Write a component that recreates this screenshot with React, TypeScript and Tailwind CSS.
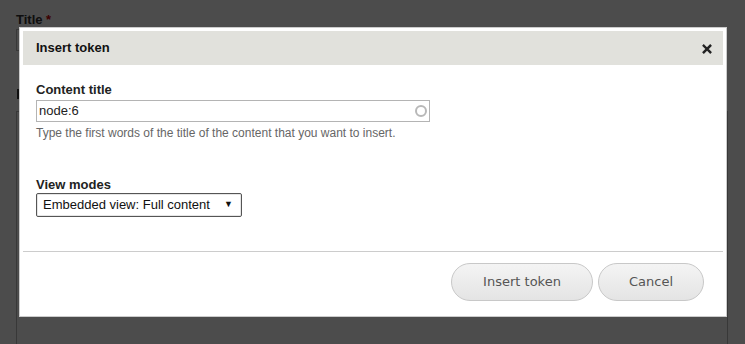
import type { ReactNode } from "react";

const sans = "font-['Liberation_Sans',Arial,sans-serif]";

function Label({ children }: { children: ReactNode }) {
  return <div className="text-[13px] font-bold leading-[16px] text-[#222]">{children}</div>;
}

function PillButton({ children, className }: { children: ReactNode; className: string }) {
  return (
    <button
      type="button"
      className={`h-[38px] rounded-[20px] border border-[#c8c8c8] bg-gradient-to-b from-[#f4f4f4] to-[#e4e4e4] font-['DejaVu_Sans',Verdana,sans-serif] text-[13px] text-[#555] ${className}`}
    >
      {children}
    </button>
  );
}

export default function App() {
  return (
    <div className={`relative h-[344px] w-[745px] overflow-hidden bg-white ${sans}`}>
      {/* page behind the modal */}
      <div className="px-[16px] pt-[12px] pr-[17px]">
        <div className="text-[13px] font-bold leading-[16px] text-[#333]">
          Title <span className="text-[#c00]">*</span>
        </div>
        <div className="mt-[1px] h-[22px] w-[560px] border border-[#bbb]" />
        <div className="ml-[1px] mt-[38px] h-[10px] w-[3px] bg-[#333]" />
        <div className="mt-[12px] h-[300px] border border-[#bbb]" />
      </div>

      <div className="absolute inset-0 bg-black/70" />

      {/* dialog */}
      <div className="absolute left-[19px] top-[27px] flex h-[290px] w-[708px] flex-col border border-[#ccc] bg-white p-[3px]">
        <div className="flex h-[34px] items-center justify-between bg-[#e1e1dc] pl-[13px] pr-[11px]">
          <span className="text-[13px] font-bold text-[#111]">Insert token</span>
          <svg width="10" height="10" viewBox="0 0 10 10" className="mt-[1px]">
            <path d="M1.8 1.8 L8.2 8.2 M8.2 1.8 L1.8 8.2" stroke="#222" strokeWidth="2.4" strokeLinecap="square" />
          </svg>
        </div>

        <div className="flex-1 px-[13px] pt-[17px]">
          <Label>Content title</Label>
          <div className="mt-[2px] flex h-[22px] w-[394px] items-center justify-between border border-[#b4b4b4] pl-[2px] pr-[2px]">
            <span className="text-[13px] text-[#222]">node:6</span>
            <span className="h-[12px] w-[12px] rounded-full border-2 border-[#b8b8b8]" />
          </div>
          <div className="mt-[4px] text-[12px] leading-[15px] text-[#666]">
            Type the first words of the title of the content that you want to insert.
          </div>

          <div className="mt-[36px]">
            <Label>View modes</Label>
          </div>
          <div className="flex h-[24px] w-[206px] items-center justify-between rounded-[2px] border border-[#555] bg-white pl-[6px] pr-[8px] shadow-[inset_0_0_0_1px_#e6e6e6]">
            <span className="text-[13px] text-[#111]">Embedded view: Full content</span>
            <span className="text-[9px] text-[#111]">▼</span>
          </div>
        </div>

        <div className="flex h-[62px] items-start justify-end gap-[5px] border-t border-[#ccc] pr-[19px] pt-[11px]">
          <PillButton className="w-[142px]">Insert token</PillButton>
          <PillButton className="w-[106px]">Cancel</PillButton>
        </div>
      </div>
    </div>
  );
}
